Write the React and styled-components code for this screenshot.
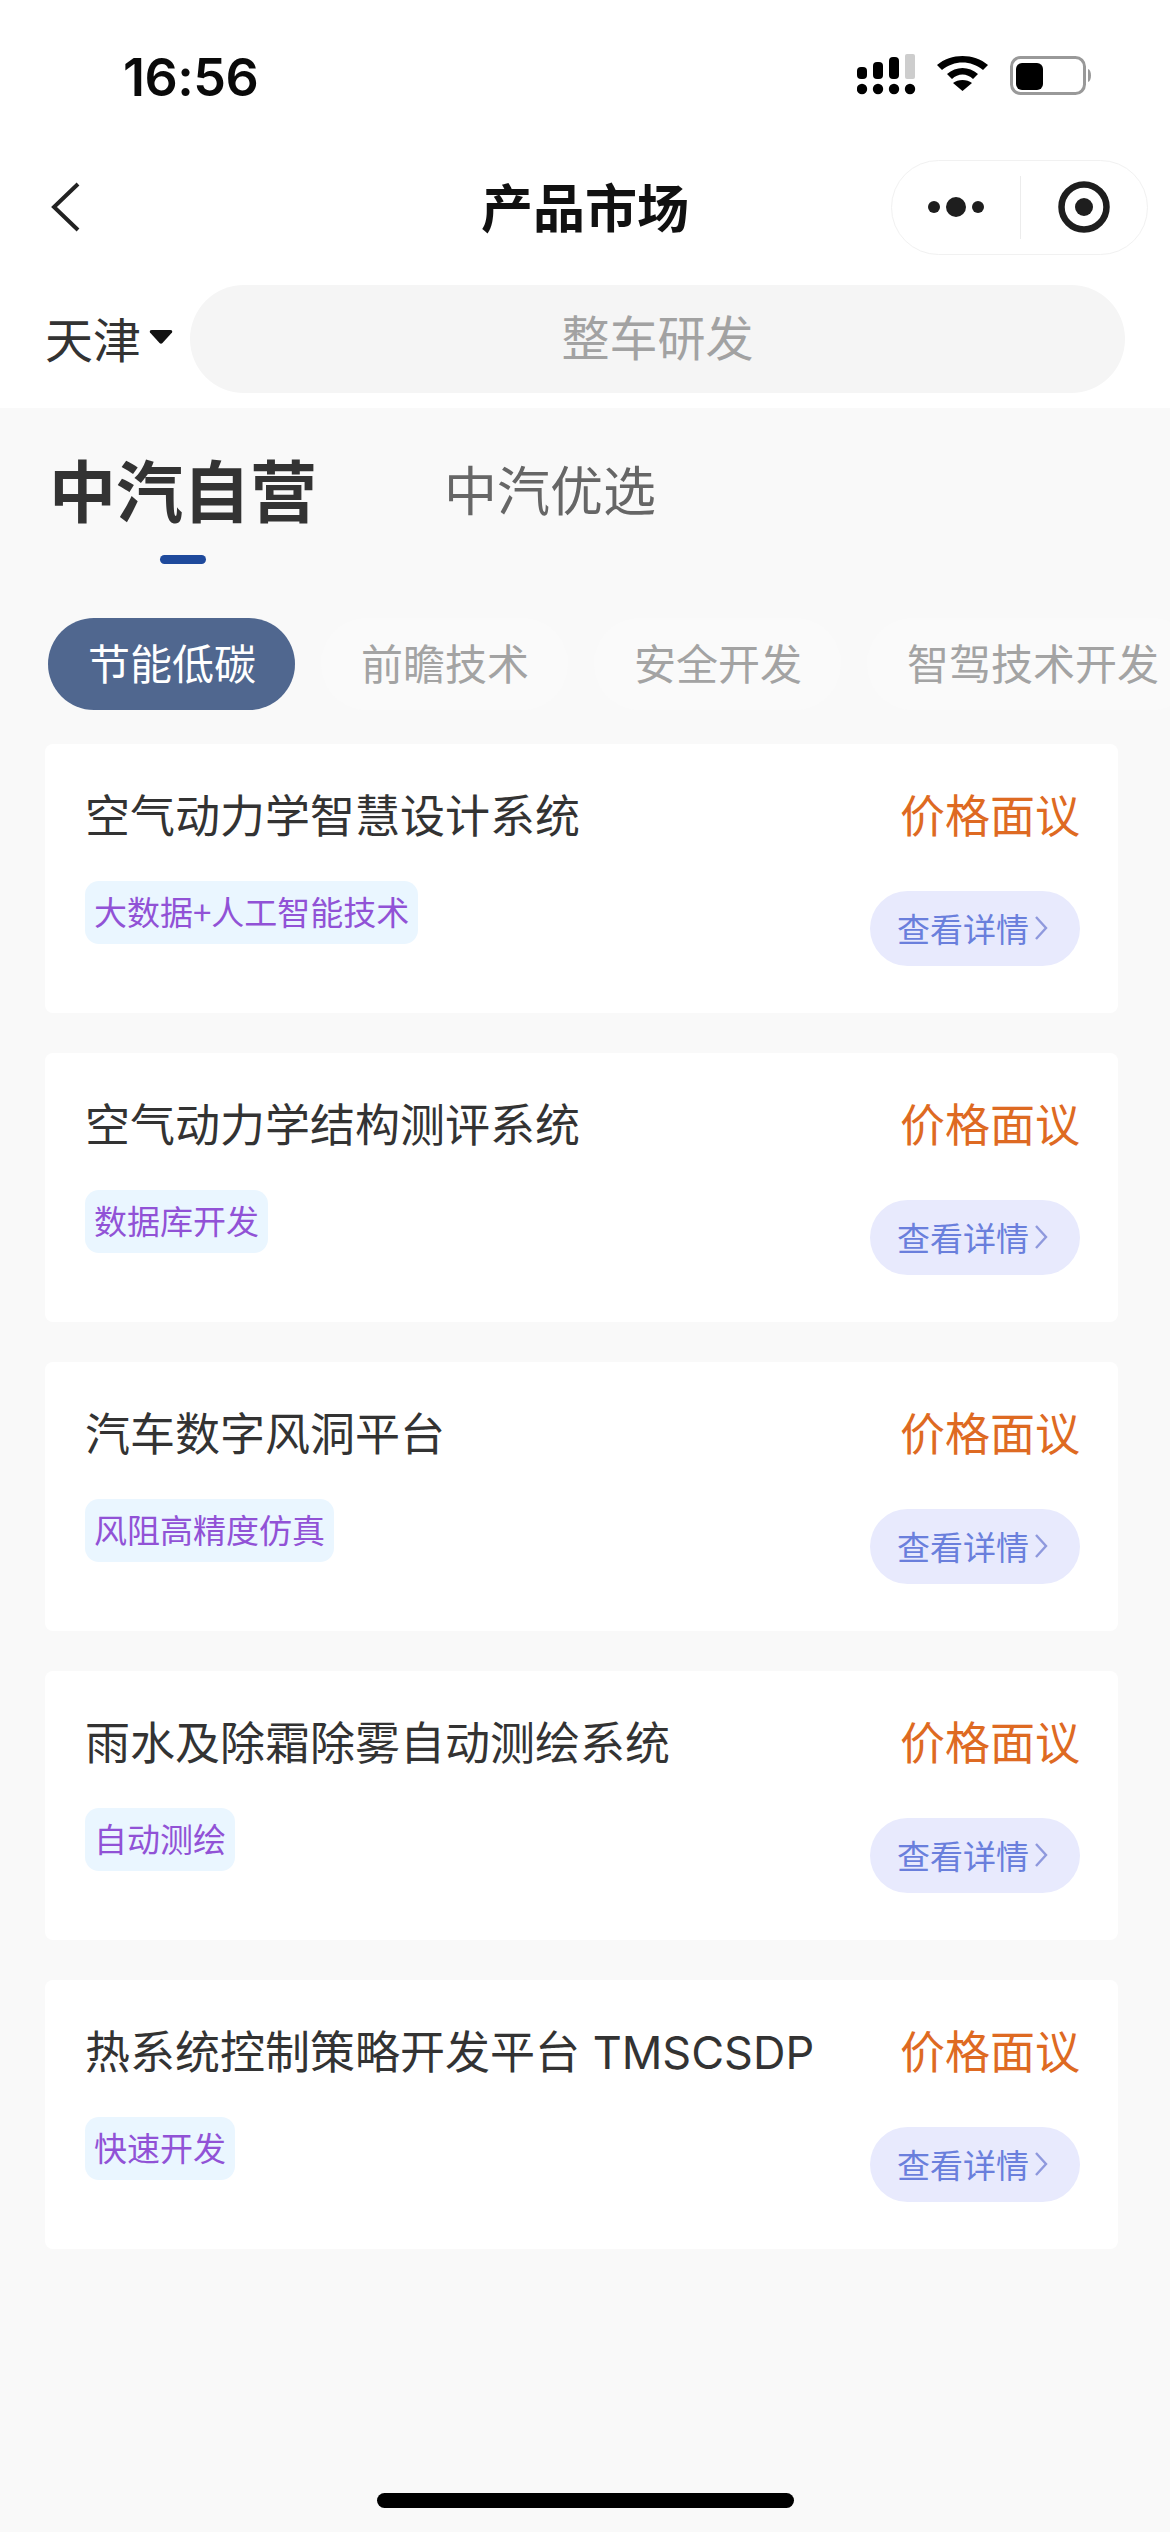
import React from "react";
import styled, { createGlobalStyle } from "styled-components";

const GlobalStyle = createGlobalStyle`
  html, body { margin: 0; padding: 0; background: #f9f9f9; }
  * { box-sizing: border-box; }
  body { font-family: "Noto Sans CJK SC", "Noto Sans", sans-serif; }
`;

const Page = styled.div`
  width: 1170px;
  height: 2532px;
  overflow: hidden;
  display: flex;
  flex-direction: column;
  background: #f9f9f9;
`;

const Header = styled.header`
  height: 408px;
  background: #fff;
  flex: none;
`;

const StatusBar = styled.div`
  height: 150px;
  display: flex;
  align-items: flex-start;
  justify-content: space-between;
  padding: 54px 76px 0 123px;
`;

const Clock = styled.span`
  font-family: "Inter", "Liberation Sans", sans-serif;
  font-size: 52px;
  font-weight: 600;
  line-height: 48px;
  letter-spacing: -0.5px;
  color: #0a0a0a;
`;

const NavBar = styled.nav`
  height: 114px;
  display: grid;
  grid-template-columns: minmax(0, 1fr) auto minmax(0, 1fr);
  align-items: center;
  padding: 0 22px;
`;

const BackSlot = styled.div`
  padding-left: 28px;
`;

const Title = styled.h1`
  margin: -3px 0 0;
  font-size: 52px;
  font-weight: 700;
  line-height: 60px;
  color: #111;
`;

const Capsule = styled.div`
  justify-self: end;
  width: 257px;
  height: 95px;
  padding-left: 2px;
  border: 1px solid #f1f1f1;
  border-radius: 48px;
  display: flex;
  align-items: center;
`;

const CapsuleSlot = styled.div`
  flex: 1;
  height: 63px;
  display: flex;
  align-items: center;
  justify-content: center;
  border-left: ${(p) => (p.$divided ? "1px solid #ececec" : "none")};
`;

const SearchRow = styled.div`
  margin-top: 21px;
  height: 108px;
  display: flex;
  align-items: center;
  padding: 0 45px;
`;

const City = styled.div`
  width: 145px;
  flex: none;
  display: flex;
  align-items: center;
  gap: 8px;
  font-size: 48px;
  line-height: 60px;
  color: #333;
  padding-bottom: 5px;
`;

const SearchBox = styled.div`
  flex: 1;
  height: 108px;
  border-radius: 54px;
  background: #f5f5f5;
  display: flex;
  align-items: center;
  justify-content: center;
  font-size: 48px;
  color: #a2a2a2;
  padding-bottom: 8px;
`;

const TabRow = styled.div`
  margin-top: 43px;
  display: flex;
  align-items: center;
  height: 74px;
  padding-left: 49px;
  gap: 127px;
`;

const Tab = styled.div`
  font-size: ${(p) => (p.$active ? 67 : 53)}px;
  font-weight: ${(p) => (p.$active ? 700 : 400)};
  line-height: 74px;
  color: ${(p) => (p.$active ? "#333" : "#666")};
`;

const TabMark = styled.div`
  margin: 30px 0 0 160px;
  width: 46px;
  height: 9px;
  border-radius: 5px;
  background: #1f4a9c;
`;

const ChipRow = styled.div`
  margin-top: 54px;
  display: flex;
  gap: 26px;
  padding-left: 48px;
  overflow: hidden;
  flex: none;
`;

const Chip = styled.div`
  flex: none;
  height: 92px;
  padding: 0 39px 5px 40px;
  border-radius: 46px;
  display: flex;
  align-items: center;
  font-size: 42px;
  color: ${(p) => (p.$active ? "#fff" : "#a3a3a3")};
  background: ${(p) => (p.$active ? "#50678f" : "#fafafa")};
`;

const CardList = styled.div`
  margin-top: 34px;
  padding: 0 52px 0 45px;
  display: flex;
  flex-direction: column;
  gap: 40px;
`;

const Card = styled.article`
  height: 269px;
  padding: 40px 38px 0 40px;
  background: #fff;
  border-radius: 8px;
`;

const TopLine = styled.div`
  display: flex;
  justify-content: space-between;
  align-items: baseline;
  height: 61px;
`;

const Name = styled.div`
  font-family: "Inter", "Noto Sans CJK SC", sans-serif;
  font-size: 45px;
  line-height: 60px;
  color: #333;
  white-space: nowrap;
`;

const Price = styled.div`
  font-size: 45px;
  line-height: 60px;
  color: #de6a22;
  white-space: nowrap;
`;

const BottomLine = styled.div`
  display: flex;
  justify-content: space-between;
  align-items: flex-start;
`;

const Tag = styled.div`
  margin-top: 36px;
  height: 63px;
  padding: 0 9px 4px;
  border-radius: 14px;
  background: #eaf6ff;
  display: flex;
  align-items: center;
  font-size: 33px;
  color: #9152d6;
`;

const DetailButton = styled.div`
  margin-top: 46px;
  width: 210px;
  height: 75px;
  border-radius: 38px;
  background: #e8eafd;
  display: flex;
  align-items: center;
  gap: 5px;
  padding: 0 0 2px 27px;
  font-size: 33px;
  color: #6a7fdc;
`;

const Spacer = styled.div`
  flex: 1;
`;

const HomeBar = styled.div`
  align-self: center;
  width: 417px;
  height: 15px;
  margin-bottom: 24px;
  border-radius: 8px;
  background: #000;
`;

const StatusIcons = styled.div`
  display: flex;
  align-items: center;
`;

const SignalIcon = () => (
  <svg width="134" height="44" viewBox="0 0 134 44" style={{ display: "block" }}>
    <rect x="0" y="13" width="10" height="12" rx="4" fill="#000" />
    <rect x="16" y="8" width="10" height="17" rx="4" fill="#000" />
    <rect x="32" y="3" width="10" height="22" rx="4" fill="#000" />
    <rect x="48" y="0" width="10" height="25" rx="2" fill="#cdcdcd" />
    {[5, 21, 37, 53].map((cx) => (
      <circle key={cx} cx={cx} cy="35" r="5.2" fill="#000" />
    ))}
    <path d="M80 11 C94 -1 117 -1 131 11 L126 16 C114 6 97 6 85 16 Z" fill="#000" />
    <path d="M90 20 C99 12 112 12 121 20 L116 25 C110 19 101 19 95 25 Z" fill="#000" />
    <path d="M105.5 37 L96 29 C101 25 110 25 115 29 Z" fill="#000" />
  </svg>
);

const BatteryIcon = () => (
  <svg width="84" height="40" viewBox="0 0 84 40" style={{ display: "block", marginLeft: "19px" }}>
    <rect x="1.5" y="1.5" width="73" height="36" rx="9" fill="#fff" stroke="#999" strokeWidth="3" />
    <rect x="6" y="7" width="27" height="27" rx="6" fill="#000" />
    <path d="M78 13 C82 14 82 25 78 26 Z" fill="#999" />
  </svg>
);

const BackIcon = () => (
  <svg width="30" height="50" viewBox="0 0 30 50" style={{ display: "block" }}>
    <path d="M28 2 L4 25 L28 48" fill="none" stroke="#222" strokeWidth="4" />
  </svg>
);

const DotsIcon = () => (
  <svg width="58" height="22" viewBox="0 0 58 22" style={{ display: "block" }}>
    <circle cx="6" cy="11" r="6" fill="#1e1e1e" />
    <circle cx="28" cy="11" r="10" fill="#1e1e1e" />
    <circle cx="50" cy="11" r="6" fill="#1e1e1e" />
  </svg>
);

const TargetIcon = () => (
  <svg width="52" height="52" viewBox="0 0 52 52" style={{ display: "block" }}>
    <circle cx="26" cy="26" r="22.5" fill="none" stroke="#1e1e1e" strokeWidth="6.5" />
    <circle cx="26" cy="26" r="9" fill="#1e1e1e" />
  </svg>
);

const Caret = () => (
  <svg width="24" height="14" viewBox="0 0 24 14" style={{ display: "block", flex: "none" }}>
    <path d="M1 2.5 Q0 0 3 0 H21 Q24 0 23 2.5 L13.5 13 Q12 14.5 10.5 13 Z" fill="#111" />
  </svg>
);

const Chevron = () => (
  <svg width="14" height="26" viewBox="0 0 14 26" style={{ display: "block", flex: "none" }}>
    <path d="M2 2 L12 13 L2 24" fill="none" stroke="#8f99dd" strokeWidth="2.4" />
  </svg>
);

const chips = ["节能低碳", "前瞻技术", "安全开发", "智驾技术开发"];

const products = [
  { name: "空气动力学智慧设计系统", tag: "大数据+人工智能技术" },
  { name: "空气动力学结构测评系统", tag: "数据库开发" },
  { name: "汽车数字风洞平台", tag: "风阻高精度仿真" },
  { name: "雨水及除霜除雾自动测绘系统", tag: "自动测绘" },
  { name: "热系统控制策略开发平台 TMSCSDP", tag: "快速开发" },
];

export default function App() {
  return (
    <Page>
      <GlobalStyle />
      <Header>
        <StatusBar>
          <Clock>16:56</Clock>
          <StatusIcons>
            <SignalIcon />
            <BatteryIcon />
          </StatusIcons>
        </StatusBar>
        <NavBar>
          <BackSlot>
            <BackIcon />
          </BackSlot>
          <Title>产品市场</Title>
          <Capsule>
            <CapsuleSlot>
              <DotsIcon />
            </CapsuleSlot>
            <CapsuleSlot $divided>
              <TargetIcon />
            </CapsuleSlot>
          </Capsule>
        </NavBar>
        <SearchRow>
          <City>
            天津
            <Caret />
          </City>
          <SearchBox>整车研发</SearchBox>
        </SearchRow>
      </Header>

      <TabRow>
        <Tab $active>中汽自营</Tab>
        <Tab>中汽优选</Tab>
      </TabRow>
      <TabMark />

      <ChipRow>
        {chips.map((chip, i) => (
          <Chip key={chip} $active={i === 0}>
            {chip}
          </Chip>
        ))}
      </ChipRow>

      <CardList>
        {products.map((p) => (
          <Card key={p.name}>
            <TopLine>
              <Name>{p.name}</Name>
              <Price>价格面议</Price>
            </TopLine>
            <BottomLine>
              <Tag>{p.tag}</Tag>
              <DetailButton>
                查看详情
                <Chevron />
              </DetailButton>
            </BottomLine>
          </Card>
        ))}
      </CardList>

      <Spacer />
      <HomeBar />
    </Page>
  );
}
